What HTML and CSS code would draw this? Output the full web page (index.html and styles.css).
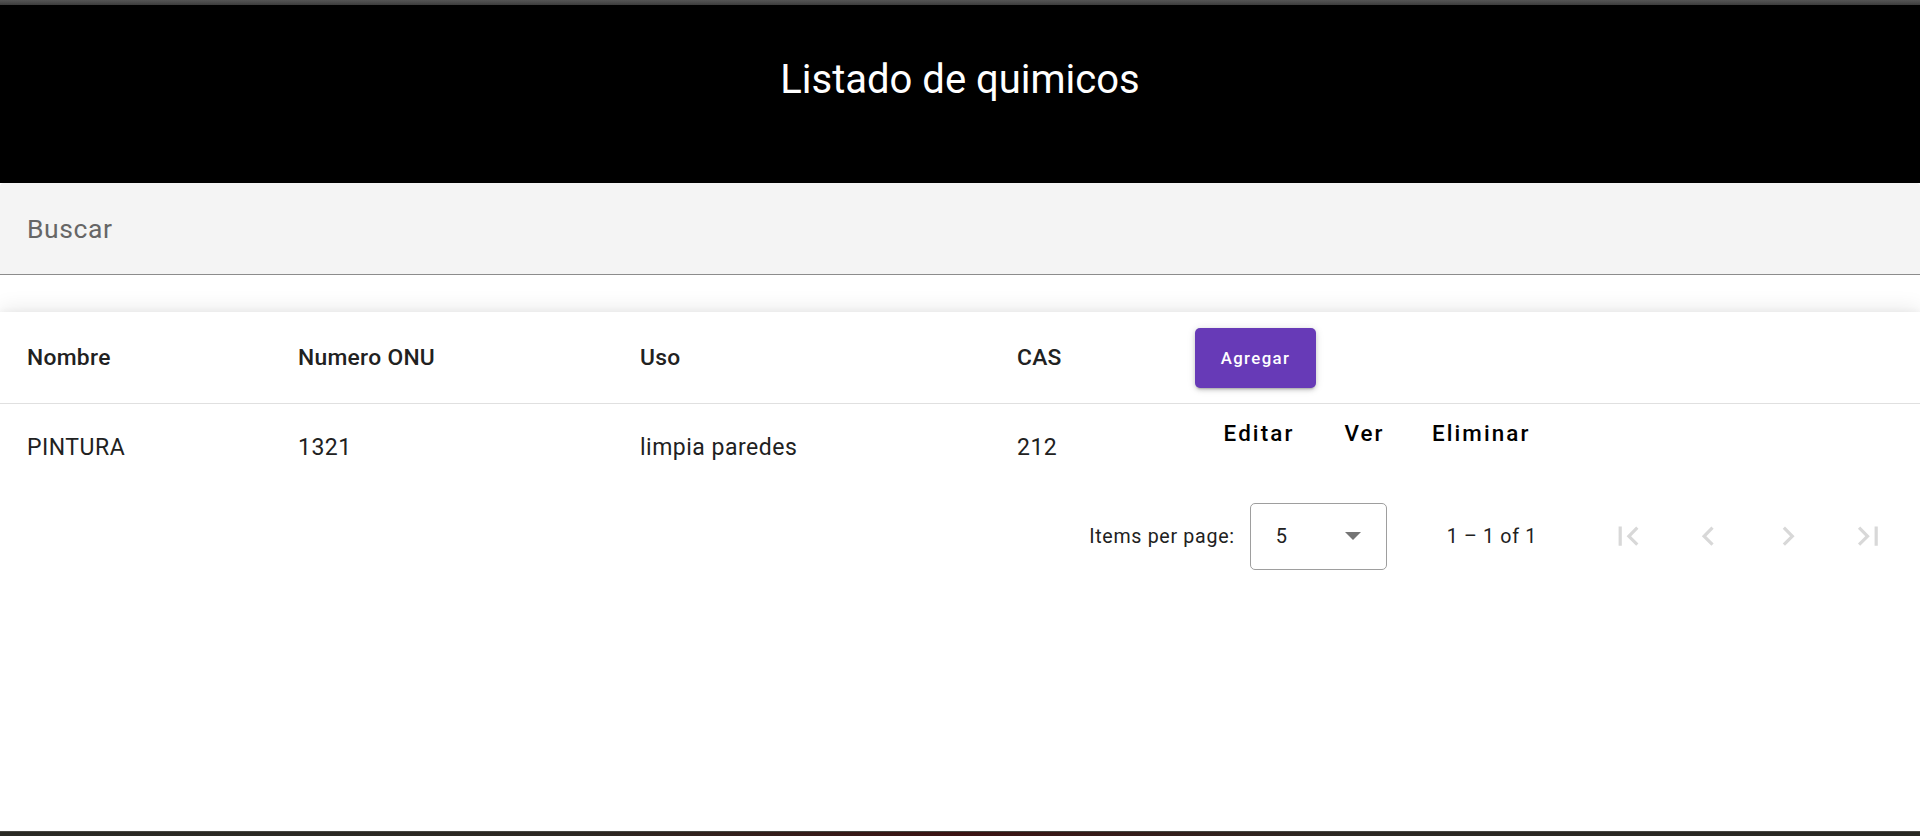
FILE: index.html
```html
<!DOCTYPE html>
<html lang="es">
<head>
<meta charset="utf-8">
<title>Listado de quimicos</title>
<link rel="stylesheet" href="styles.css">
</head>
<body>
<div class="topstrip"></div>
<header class="hero">
  <h1 class="title">Listado de quimicos</h1>
</header>
<div class="search">
  <span class="search-label">Buscar</span>
</div>
<div class="spacer"></div>
<main class="card">
  <div class="row header-row">
    <div class="cell">Nombre</div>
    <div class="cell">Numero ONU</div>
    <div class="cell">Uso</div>
    <div class="cell">CAS</div>
    <div class="cell"><button class="btn-add">Agregar</button></div>
  </div>
  <div class="row data-row">
    <div class="cell">PINTURA</div>
    <div class="cell">1321</div>
    <div class="cell">limpia paredes</div>
    <div class="cell">212</div>
    <div class="cell actions">
      <button class="btn-text">Editar</button>
      <button class="btn-text">Ver</button>
      <button class="btn-text">Eliminar</button>
    </div>
  </div>
  <div class="paginator">
    <span class="pg-label">Items per page:</span>
    <div class="pg-select">
      <span class="pg-value">5</span>
      <span class="pg-arrow"></span>
    </div>
    <span class="pg-range">1 – 1 of 1</span>
    <div class="pg-nav">
      <button class="pg-btn" aria-label="First page"><svg viewBox="0 0 24 24"><path d="M18.41 16.59L13.82 12l4.59-4.59L17 6l-6 6 6 6zM6 6h2v12H6z"/></svg></button>
      <button class="pg-btn" aria-label="Previous page"><svg viewBox="0 0 24 24"><path d="M15.41 7.41L14 6l-6 6 6 6 1.41-1.41L10.83 12z"/></svg></button>
      <button class="pg-btn" aria-label="Next page"><svg viewBox="0 0 24 24"><path d="M10 6L8.59 7.41 13.17 12l-4.58 4.59L10 18l6-6z"/></svg></button>
      <button class="pg-btn" aria-label="Last page"><svg viewBox="0 0 24 24"><path d="M5.59 7.41L10.18 12l-4.59 4.59L7 18l6-6-6-6zM16 6h2v12h-2z"/></svg></button>
    </div>
  </div>
</main>
<div class="bottomstrip"></div>
</body>
</html>
```
FILE: styles.css
```css
* { box-sizing: border-box; }
html, body { margin: 0; padding: 0; }
body {
  width: 1920px;
  height: 836px;
  overflow: hidden;
  display: flex;
  flex-direction: column;
  background: #fff;
  font-family: Roboto, "Noto Sans", Arial, sans-serif;
  color: #212121;
}
.topstrip {
  height: 5px;
  flex: none;
  background: linear-gradient(180deg, #555 0%, #474747 60%, #3c3c3c 100%);
}
.hero {
  flex: none;
  height: 178px;
  background: #000;
  padding-top: 51px;
  text-align: center;
}
.title {
  margin: 0;
  font-size: 40px;
  line-height: 48px;
  font-weight: 400;
  color: #fff;
}
.search {
  flex: none;
  height: 92px;
  background: #f4f4f4;
  border-radius: 4px 4px 0 0;
  border-bottom: 1px solid #8c8c8c;
  display: flex;
  align-items: center;
  padding-left: 27px;
}
.search-label {
  font-size: 26.5px;
  letter-spacing: 0.6px;
  color: #666;
}
.spacer {
  flex: none;
  height: 37px;
}
.card {
  flex: 1;
  background: #fff;
  box-shadow: 0 -3px 20px rgba(0, 0, 0, 0.09), 0 -1px 6px rgba(0, 0, 0, 0.04);
  position: relative;
}
.row {
  display: grid;
  grid-template-columns: 271px 342px 377px 178px 1fr;
  padding-left: 27px;
}
.header-row {
  height: 92px;
  border-bottom: 1px solid #e0e0e0;
  align-items: center;
  font-size: 22.8px;
  letter-spacing: 0.3px;
  font-weight: 500;
}
.data-row {
  height: 86px;
  align-items: center;
  font-size: 23px;
  letter-spacing: 0.5px;
  font-weight: 400;
}
.btn-add {
  font-family: inherit;
  width: 121px;
  height: 60px;
  border: none;
  border-radius: 5px;
  background: #673ab7;
  color: #fff;
  font-size: 16.8px;
  font-weight: 500;
  letter-spacing: 1.4px;
  box-shadow: 0 3px 2px -2px rgba(0,0,0,.2), 0 2px 4px 0 rgba(0,0,0,.14), 0 1px 8px 0 rgba(0,0,0,.12);
  cursor: pointer;
}
.actions {
  align-self: start;
  display: flex;
  gap: 3.5px;
  padding-left: 13px;
}
.btn-text {
  font-family: inherit;
  min-width: 102px;
  height: 58px;
  padding: 0 13px;
  border: none;
  background: transparent;
  color: #000;
  font-size: 22.4px;
  font-weight: 500;
  letter-spacing: 2.1px;
  cursor: pointer;
}
.paginator {
  height: 92px;
  display: flex;
  align-items: center;
  justify-content: flex-end;
  padding-right: 13px;
  font-size: 19.6px;
  letter-spacing: 0.7px;
  color: #212121;
}
.pg-label { margin-right: 15px; }
.pg-select {
  width: 137px;
  height: 67px;
  border: 1px solid #9e9e9e;
  border-radius: 5px;
  display: flex;
  align-items: center;
  justify-content: space-between;
  padding: 0 25px 0 25px;
  margin-right: 60px;
  font-size: 20px;
  letter-spacing: 0.2px;
}
.pg-arrow {
  width: 0;
  height: 0;
  border-left: 8.5px solid transparent;
  border-right: 8.5px solid transparent;
  border-top: 8.5px solid #757575;
}
.pg-range { margin-right: 53px; }
.pg-nav {
  display: flex;
  gap: 3px;
}
.pg-btn {
  width: 77px;
  height: 77px;
  border: none;
  background: transparent;
  padding: 0;
  display: flex;
  align-items: center;
  justify-content: center;
}
.pg-btn svg {
  width: 38.4px;
  height: 38.4px;
  fill: #d8d8d8;
}
.bottomstrip {
  flex: none;
  height: 5px;
  background: linear-gradient(90deg, #2c2c26 0%, #2e2a24 30%, #3e1414 50%, #2e2a24 70%, #2a2a24 100%);
  border-top: 1px solid #4a4a44;
}
```
